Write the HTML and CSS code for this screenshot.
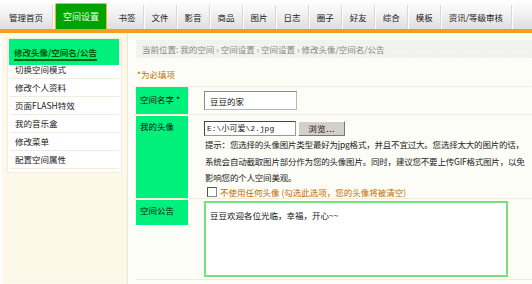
FILE: index.html
```html
<!DOCTYPE html>
<html lang="zh-CN">

<head>
  <meta charset="UTF-8">
  <meta name="viewport" content="width=device-width, initial-scale=1.0">
  <title>空间设置</title>
  <link rel="stylesheet" href="styles.css">
</head>

<body>
  <div class="nav">
    <ul class="tabs">
      <li class="tab tab-home">管理首页</li>
      <li class="tab tab-active">空间设置</li>
      <li class="tab">书签</li>
      <li class="tab">文件</li>
      <li class="tab">影音</li>
      <li class="tab">商品</li>
      <li class="tab">图片</li>
      <li class="tab">日志</li>
      <li class="tab">圈子</li>
      <li class="tab">好友</li>
      <li class="tab">综合</li>
      <li class="tab">模板</li>
      <li class="tab">资讯/等级审核</li>
    </ul>
  </div>
  <div class="nav-bar"></div>

  <div class="page">
    <div class="side">
      <ul class="menu">
        <li class="menu-item menu-active"><span>修改头像/空间名/公告</span></li>
        <li class="menu-item">切换空间模式</li>
        <li class="menu-item">修改个人资料</li>
        <li class="menu-item">页面FLASH特效</li>
        <li class="menu-item">我的音乐盒</li>
        <li class="menu-item">修改菜单</li>
        <li class="menu-item">配置空间属性</li>
      </ul>
    </div>

    <div class="main">
      <div class="crumb">当前位置: 我的空间 › 空间设置 › 空间设置 › 修改头像/空间名/公告</div>
      <div class="required">*为必填项</div>

      <div class="form">
        <div class="row row-name">
          <div class="label">空间名字 *</div>
          <div class="value">
            <input class="text-input" type="text" value="豆豆的家">
          </div>
        </div>

        <div class="row row-avatar">
          <div class="label">我的头像</div>
          <div class="value">
            <div class="file">
              <span class="file-path">E:\小可爱\2.jpg</span>
              <span class="file-btn">浏览...</span>
            </div>
            <p class="hint">
              提示：您选择的头像图片类型最好为jpg格式，并且不宜过大。您选择太大的图片的话，<br>
              系统会自动截取图片部分作为您的头像图片。同时，建议您不要上传GIF格式图片，以免<br>
              影响您的个人空间美观。
            </p>
            <label class="no-avatar">
              <span class="check"></span>
              不使用任何头像 (勾选此选项，您的头像将被清空)
            </label>
          </div>
        </div>

        <div class="row row-notice">
          <div class="label label-short">空间公告</div>
          <div class="value">
            <div class="notice">豆豆欢迎各位光临，幸福，开心~~</div>
          </div>
        </div>
      </div>
    </div>
  </div>
</body>
</html>
```

FILE: styles.css
```css
html {
  background: #fff;
}

body {
  margin: 0;
  font-family: "Noto Sans CJK SC", "Noto Sans", sans-serif;
  font-size: 8.5px;
  color: #222;
  height: 284px;
  overflow: hidden;
}

ul {
  margin: 0;
  padding: 0;
  list-style: none;
}

/* top tabs */
.nav {
  height: 29px;
  background: linear-gradient(#ffffff, #f4f4f4 40%, #dedede);
}

.tabs {
  display: flex;
  height: 29px;
  align-items: flex-end;
}

.tab {
  height: 24px;
  line-height: 24px;
  padding: 0 7.5px;
  border-right: 1px solid #d8d8d8;
  box-shadow: 1px 0 0 #fff;
  color: #222;
  white-space: nowrap;
}

.tab-home {
  padding: 0 9px;
  margin-right: 2px;
}

.tab-active {
  height: 25px;
  line-height: 25px;
  padding: 0 7px;
  margin-right: 4px;
  background: #00a400;
  color: #eaffea;
  font-size: 9px;
  border: 1px solid #f0b030;
  border-bottom: none;
  border-radius: 2px 2px 0 0;
  box-shadow: none;
}

.nav-bar {
  height: 4px;
  background: #f0a01c;
}

/* layout */
.page {
  display: flex;
  height: 251px;
}

.side {
  width: 115px;
  margin-left: 2px;
  padding: 5px 5px 0 5px;
  background-color: #fcf7e6;
  background-image: radial-gradient(#fffdf4 0.6px, transparent 0.8px);
  background-size: 4px 4px;
  border-right: 1px solid #eee8d6;
}

.menu {
  background: #fff;
  border: 1px solid #f1ece0;
  padding: 0 2px 3px 2px;
}

.menu-item {
  height: 17px;
  line-height: 17px;
  padding-left: 5px;
  border-bottom: 1px solid #f2ecdc;
  white-space: nowrap;
}

.menu-active {
  height: 26px;
  line-height: 26px;
  margin: 0 0 -4px -1px;
  padding-left: 5px;
  background: #00f07c;
  border-bottom: none;
  position: relative;
}

.menu-active span {
  color: #005c00;
  font-weight: bold;
  border-bottom: 2px solid #006400;
  padding-bottom: 1px;
}

.main {
  flex: 1;
  background: #fdfdf8;
  padding: 7px 0 0 8px;
  overflow: hidden;
}

.crumb {
  height: 18px;
  line-height: 18px;
  padding-left: 6px;
  color: #888;
  background-color: #f1f1ed;
  background-image: radial-gradient(#f8f8f5 0.6px, transparent 0.8px);
  background-size: 3px 3px;
  white-space: nowrap;
}

.required {
  color: #c07400;
  line-height: 12px;
  margin: 10px 0 0 1px;
  height: 18px;
}

/* form */
.form {
  border-top: 1px dotted #f1e6cc;
}

.row {
  display: grid;
  grid-template-columns: 52px 1fr;
  border-bottom: 1px solid #f3ead8;
}

.label {
  background: #00f07c;
  color: #111;
  padding: 4px 0 0 4px;
}

.row-name .label {
  padding-top: 6px;
}

.row-avatar .label {
  margin-top: 1px;
}

.label-short {
  align-self: start;
  height: 21px;
  margin-top: 1px;
}

.value {
  padding-left: 16px;
}

.row-name .value {
  padding: 4px 0 4px 16px;
}

.text-input {
  display: block;
  box-sizing: border-box;
  width: 93px;
  height: 19px;
  margin: 0;
  padding: 0 5px;
  font: inherit;
  font-size: 8.5px;
  color: #111;
  background: #fff;
  border: 1px solid #b8b8b8;
  border-top-color: #8a8a8a;
  border-left-color: #8a8a8a;
  outline: none;
}

.row-avatar .value {
  padding-top: 6px;
}

.file {
  display: flex;
  height: 15px;
  gap: 2px;
}

.file-path {
  box-sizing: border-box;
  width: 92px;
  height: 15px;
  line-height: 13px;
  padding-left: 2px;
  font-family: "Liberation Mono", "Noto Sans CJK SC", monospace;
  font-size: 8px;
  background: #fff;
  border: 1px solid #999;
  border-top-color: #444;
  border-left-color: #444;
  white-space: nowrap;
  overflow: hidden;
}

.file-btn {
  box-sizing: border-box;
  width: 47px;
  height: 15px;
  line-height: 13px;
  text-align: center;
  background: #d4d0c8;
  border: 1px solid #777;
  border-top-color: #fff;
  border-left-color: #fff;
  color: #111;
  letter-spacing: 0.5px;
}

.hint {
  margin: 0 0 0 1px;
  line-height: 16.5px;
  letter-spacing: -0.2px;
  color: #222;
  white-space: nowrap;
}

.no-avatar {
  display: flex;
  align-items: center;
  gap: 3px;
  height: 12px;
  margin-left: 3px;
  color: #c06c00;
  white-space: nowrap;
}

.check {
  width: 8px;
  height: 8px;
  background: #fff;
  border: 1px solid #888;
  border-top-color: #555;
  border-left-color: #555;
}

.row-notice .value {
  padding-top: 2px;
  padding-bottom: 2px;
}

.notice {
  box-sizing: border-box;
  width: 304px;
  height: 76px;
  padding: 6px 4px;
  line-height: 12px;
  background: #fff;
  border: 2px solid #78e078;
  color: #111;
}
```
